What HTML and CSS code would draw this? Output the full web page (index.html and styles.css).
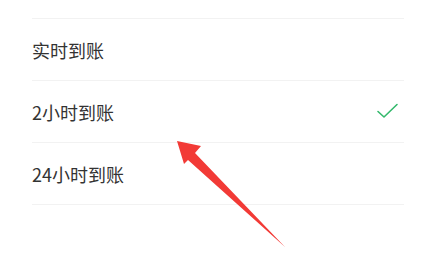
FILE: index.html
```html
<!DOCTYPE html>
<html lang="zh-CN">
<head>
    <meta charset="UTF-8">
    <title>到账时间</title>
    <link rel="stylesheet" href="styles.css">
</head>
<body>
    <div class="page">
        <ul class="options">
            <li class="option">实时到账</li>
            <li class="option selected">
                <span>2小时到账</span>
                <svg class="check" width="24" height="18" viewBox="0 0 24 18">
                    <path d="M2 8.5 L8 14 L21 1.5" fill="none" stroke="#34b96c" stroke-width="1.6" stroke-linecap="round" stroke-linejoin="round"/>
                </svg>
            </li>
            <li class="option">24小时到账</li>
        </ul>

        <!-- 标注箭头 -->
        <svg class="arrow" width="438" height="266" viewBox="0 0 438 266">
            <polygon points="177,141 201,146 195,153 285,247 188,160 184,164" fill="#f23a36"/>
        </svg>
    </div>
</body>
</html>
```

FILE: styles.css
```css
body, html {
    margin: 0;
    height: 100%;
    background: #fff;
    font-family: "Noto Sans CJK SC", "Noto Sans", sans-serif;
    color: #333;
}

.page {
    position: relative;
    width: 438px;
    height: 266px;
    overflow: hidden;
}

.options {
    list-style: none;
    margin: 18px 34px 0 32px;
    padding: 0;
}

.option {
    display: flex;
    align-items: center;
    justify-content: space-between;
    height: 61px;
    border-top: 1px solid #f2f2f2;
    font-size: 18px;
}

.option:last-child {
    border-bottom: 1px solid #f2f2f2;
}

.check {
    margin-right: 4px;
}

.arrow {
    position: absolute;
    top: 0;
    left: 0;
}
```
